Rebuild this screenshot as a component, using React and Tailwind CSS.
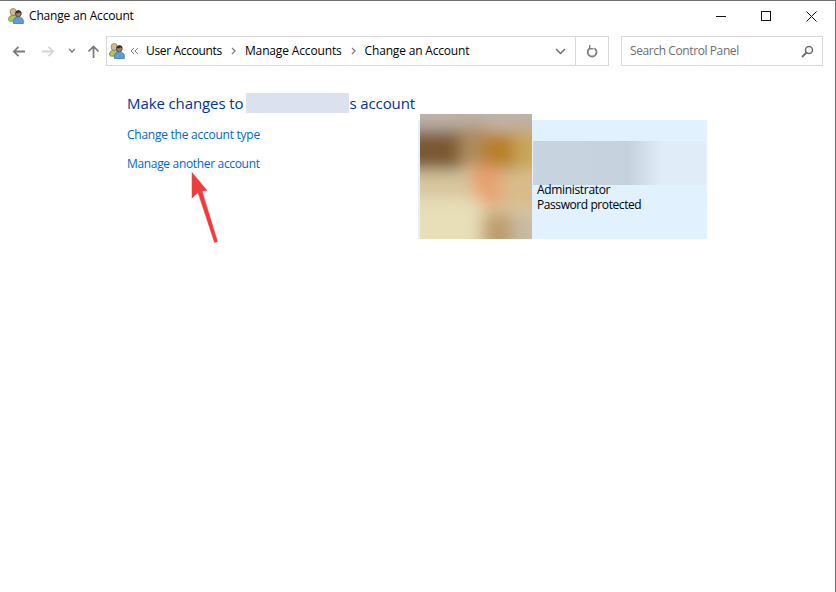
const font = { fontFamily: '"Open Sans", "Noto Sans", sans-serif' };

function UsersIcon() {
  return (
    <svg width="16" height="16" viewBox="0 0 17 17" className="shrink-0">
      <ellipse cx="5.500" cy="4.200" rx="3.300" ry="3.700" fill="#d5b88e" stroke="#87904f" strokeWidth="0.900" />
      <path d="M0.500 12.500c0-3.500 2.200-4.700 5-4.700s4.500 1.200 4.500 3v3.200H1.500z" fill="#a8c466" stroke="#6d8a45" strokeWidth="0.800" />
      <ellipse cx="11" cy="6" rx="3" ry="3.400" fill="#a57f5f" stroke="#3c3a3a" strokeWidth="0.900" />
      <path d="M11 2.800c-2 0-3.200 1.300-3.200 2.800 1.600.2 3.600-.2 4.500-1.200.6.800 1 1 1.900 1C14.200 3.900 13 2.800 11 2.800z" fill="#2f2c2c" />
      <path d="M5.800 16.500v-2.500c0-3 2-4.300 5.200-4.300s5.300 1.300 5.300 4.300v2.500z" fill="#5c9ed6" stroke="#3a6ea5" strokeWidth="0.800" />
    </svg>
  );
}

function Arrow({ d, stroke = "#7a7a7a" }) {
  return (
    <svg width="13" height="13" viewBox="0 0 14 14" fill="none" stroke={stroke} strokeWidth="1.900">
      <path d={d} />
    </svg>
  );
}

function Sep() {
  return (
    <svg width="5" height="8" viewBox="0 0 5 8" fill="none" stroke="#7d7d7d" strokeWidth="1.300" className="mx-[9px] shrink-0">
      <path d="M1 1l3 3-3 3" />
    </svg>
  );
}

function Photo() {
  return (
    <svg width="112" height="125" viewBox="0 0 112 125" className="block shrink-0 -mt-[6px] relative">
      <defs>
        <filter id="b" x="-20%" y="-20%" width="140%" height="140%">
          <feGaussianBlur stdDeviation="8" />
        </filter>
        <clipPath id="c"><rect width="112" height="125" /></clipPath>
      </defs>
      <g clipPath="url(#c)">
        <rect width="112" height="125" fill="#dccfae" />
        <g filter="url(#b)">
          <rect x="-20" y="-20" width="152" height="36" fill="#bdb2a6" />
          <rect x="-20" y="16" width="64" height="40" fill="#7a5830" />
          <rect x="40" y="12" width="26" height="40" fill="#ad8c5e" />
          <rect x="62" y="18" width="34" height="38" fill="#b87e28" />
          <rect x="94" y="16" width="30" height="40" fill="#c9a658" />
          <rect x="-20" y="58" width="72" height="24" fill="#d6c59c" />
          <rect x="52" y="52" width="28" height="40" fill="#e8a070" />
          <rect x="80" y="58" width="44" height="36" fill="#d8bb8a" />
          <rect x="-20" y="84" width="82" height="60" fill="#e8deb8" />
          <rect x="62" y="100" width="30" height="40" fill="#bd9c6c" />
          <rect x="92" y="100" width="30" height="40" fill="#c8b9a2" />
        </g>
      </g>
    </svg>
  );
}

export default function App() {
  return (
    <div style={font} className="relative w-[836px] h-[592px] overflow-hidden bg-white border-t border-r border-[#6f6f6f] text-[12px] text-black">
      {/* Title bar */}
      <div className="flex items-center h-[30px] pl-2">
        <UsersIcon />
        <span className="ml-[5px] tracking-[-0.18px]">Change an Account</span>
        <div className="ml-auto flex items-center pr-[18px] gap-[35px]">
          <svg width="10" height="10" viewBox="0 0 10 10" stroke="#111" fill="none"><path d="M0 5.500h10" /></svg>
          <svg width="10" height="10" viewBox="0 0 10 10" stroke="#111" fill="none"><rect x="0.500" y="0.500" width="9" height="9" /></svg>
          <svg width="11" height="11" viewBox="0 0 11 11" stroke="#111" fill="none"><path d="M0.500 0.500l10 10M10.500 0.500l-10 10" /></svg>
        </div>
      </div>

      {/* Nav row */}
      <div className="flex items-center h-[30px] mt-[5px] pr-[12px]">
        <div className="flex items-center w-[106px] pl-[12px] shrink-0">
          <Arrow d="M7 2L2 7l5 5M2 7h12" />
          <span className="w-[17px]" />
          <Arrow d="M7 2l5 5-5 5M12 7H0" stroke="#d3d3d3" />
          <span className="w-[13px]" />
          <svg width="8" height="6" viewBox="0 0 8 6" fill="none" stroke="#7a7a7a" strokeWidth="1.400"><path d="M1 1l3 3 3-3" /></svg>
          <span className="w-[11px]" />
          <Arrow d="M1.500 7l5.500-5.500 5.500 5.500M7 2v12" />
        </div>
        <div className="flex items-center h-full w-[503px] border border-[#d9d9d9] pl-[2px] shrink-0">
          <UsersIcon />
          <svg width="9" height="8" viewBox="0 0 9 8" fill="none" stroke="#7d7d7d" className="ml-[5px] mr-[7px] shrink-0"><path d="M4 1L1 4l3 3M8 1L5 4l3 3" /></svg>
          <span className="tracking-[-0.33px]">User Accounts</span>
          <Sep />
          <span className="tracking-[-0.15px]">Manage Accounts</span>
          <Sep />
          <span className="tracking-[-0.18px]">Change an Account</span>
          <svg width="11" height="7" viewBox="0 0 11 7" fill="none" stroke="#6f6f6f" strokeWidth="1.500" className="ml-auto mr-[9px]"><path d="M1 1l4.500 4.500L10 1" /></svg>
          <div className="flex items-center justify-center w-[33px] h-full border-l border-[#d9d9d9]">
            <svg width="12" height="14" viewBox="0 0 13 14" fill="none" stroke="#808080" strokeWidth="2">
              <path d="M3.500 4.500A4.800 4.800 0 1 0 9 4" />
              <path d="M4 .5v4h4" strokeWidth="1.500" />
            </svg>
          </div>
        </div>
        <div className="flex items-center h-full ml-auto w-[202px] border border-[#d9d9d9] pl-[8px] pr-[8px] text-[#6d6d6d]">
          <span className="tracking-[-0.4px]">Search Control Panel</span>
          <svg width="13" height="13" viewBox="0 0 13 13" fill="none" stroke="#6f6f6f" className="ml-auto">
            <circle cx="8" cy="5" r="3.500" strokeWidth="1.500" />
            <path d="M5.500 7.500L1 12" strokeWidth="2" />
          </svg>
        </div>
      </div>

      {/* Content */}
      <div className="flex pt-[26px] pl-[127px]">
        <div className="w-[291px] shrink-0">
          <div className="flex items-center h-[22px] text-[15px] text-[#003399] tracking-[-0.1px] whitespace-nowrap">
            <span>Make changes to</span>
            <span className="w-[103px] h-[20px] ml-[3px] bg-[#dbe1ef] shrink-0" />
            <span>s account</span>
          </div>
          <a className="block mt-[12px] leading-[18px] text-[#0066cc] tracking-[-0.25px]">Change the account type</a>
          <a className="block mt-[11px] leading-[18px] text-[#0066cc] tracking-[-0.33px]">Manage another account</a>
        </div>
        <div className="flex w-[289px] h-[119px] mt-[28px] pl-[2px] bg-[#e2f1fe] shrink-0">
          <Photo />
          <div className="flex-1 pt-[21px] pl-[1px] pr-[2px]">
            <div className="h-[44px] bg-gradient-to-r from-[#c8d4df] via-[#c5d2dd] via-55% to-[#e0edf8] to-75%" />
            <div className="pl-[4px] leading-[15px] -mt-[3px]">
              <div className="tracking-[-0.33px]">Administrator</div>
              <div className="tracking-[-0.42px]">Password protected</div>
            </div>
          </div>
        </div>
      </div>

      {/* Annotation arrow */}
      <svg className="absolute left-[185px] top-[166px]" width="40" height="80" viewBox="0 0 40 80">
        <path d="M7 5.500L7 31 13 25.500 29.500 75.500 32.500 74.500 17 24 22 23.500z" fill="#ef3d3d" stroke="#ef3d3d" strokeWidth="0.500" />
      </svg>
    </div>
  );
}
